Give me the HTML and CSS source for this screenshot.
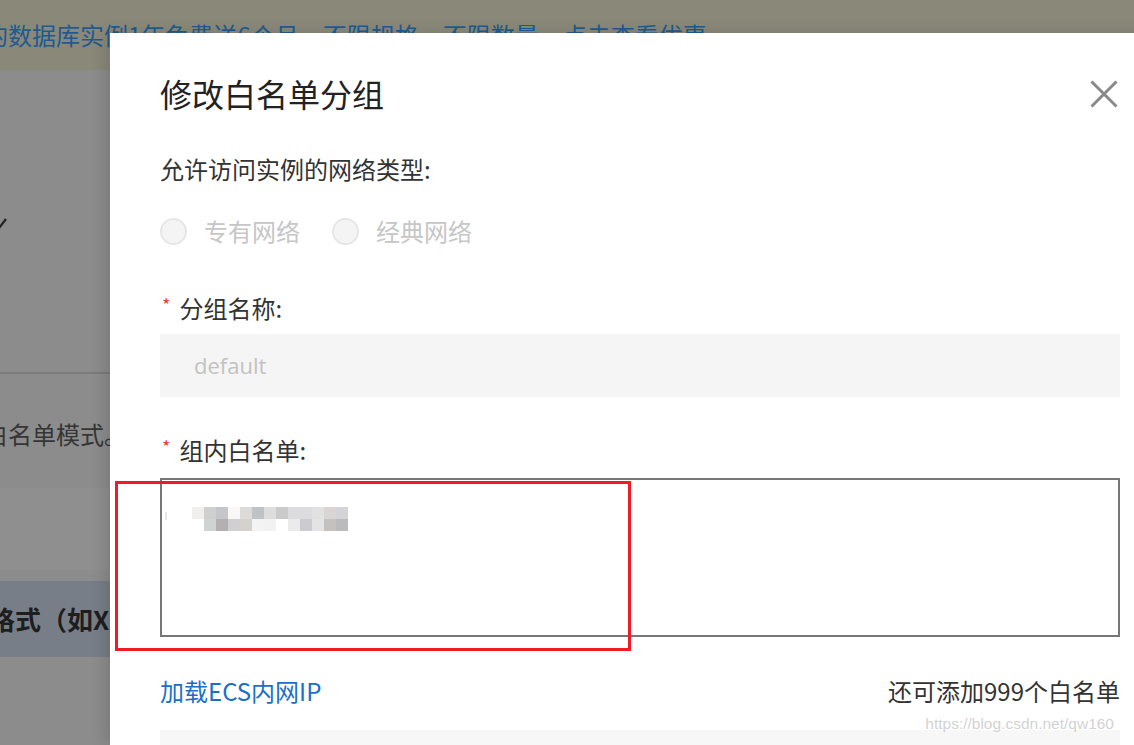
FILE: index.html
```html
<!DOCTYPE html>
<html lang="zh-CN">
<head>
<meta charset="utf-8">
<title>修改白名单分组</title>
<link rel="stylesheet" href="styles.css">
</head>
<body>
<div class="page">
  <div class="promo"><span class="promo-text">的数据库实例1年免费送6个月，不限规格，不限数量，点击查看优惠</span></div>
  <div class="page-body">
    <svg class="check" width="10" height="12" viewBox="0 0 10 12"><path d="M0 11 L7 2" stroke="#222" stroke-width="2.2" fill="none"/></svg>
    <div class="divider"></div>
    <div class="mode-text">白名单模式。</div>
    <div class="light-row"></div>
    <div class="table-head">格式（如X</div>
  </div>
</div>

<div class="modal">
  <div class="modal-header">
    <h2 class="modal-title">修改白名单分组</h2>
    <svg class="close" width="28" height="28" viewBox="0 0 28 28"><path d="M1.5 1.5 L26.5 26.5 M26.5 1.5 L1.5 26.5" stroke="#898989" stroke-width="3" fill="none"/></svg>
  </div>

  <div class="section-label">允许访问实例的网络类型:</div>
  <div class="radios">
    <label class="radio"><span class="radio-dot"></span><span>专有网络</span></label>
    <label class="radio"><span class="radio-dot"></span><span>经典网络</span></label>
  </div>

  <div class="field-label first"><span class="req">*</span><span>分组名称:</span></div>
  <div class="input disabled">default</div>

  <div class="field-label second"><span class="req">*</span><span>组内白名单:</span></div>
  <div class="textarea">
    <span class="caret"></span>
    <div class="blur">
      <div class="blur-row">
        <span class="px a1"></span><span class="px a2"></span><span class="px a3"></span><span class="px a4"></span><span class="px a5"></span><span class="px a6"></span><span class="px a7"></span><span class="px a8"></span><span class="px a9"></span><span class="px a10"></span><span class="px a11"></span><span class="px a12"></span><span class="px a13"></span>
      </div>
      <div class="blur-row">
        <span class="px b1"></span><span class="px b2"></span><span class="px b3"></span><span class="px b4"></span><span class="px b5"></span><span class="px b6"></span><span class="px b7"></span><span class="px b8"></span><span class="px b9"></span><span class="px b10"></span><span class="px b11"></span><span class="px b12"></span><span class="px b13"></span>
      </div>
    </div>
  </div>

  <div class="link-row">
    <a class="link">加载ECS内网IP</a>
    <span class="remain">还可添加999个白名单</span>
  </div>
  <div class="input bottom"></div>
</div>

<div class="annotation"></div>
<div class="watermark">https://blog.csdn.net/qw160</div>
</body>
</html>
```

FILE: styles.css
```css
html, body {
  margin: 0;
  padding: 0;
}
html {
  overflow: hidden;
}
body {
  width: 1134px;
  height: 745px;
  overflow: hidden;
  position: relative;
  background: #8c8c8c;
  font-family: "Noto Sans CJK SC", "Open Sans", sans-serif;
  color: #333;
}

/* background page (under mask) */
.page {
  display: flex;
  flex-direction: column;
}
.promo {
  height: 70px;
  box-sizing: border-box;
  padding-top: 19px;
  background: #898879;
  font-size: 24px;
  line-height: 32px;
  color: #1f5a90;
  white-space: nowrap;
  overflow: hidden;
  text-indent: -16px;
}
.page-body {
  display: flex;
  flex-direction: column;
  width: 110px;
  overflow: hidden;
}
.check {
  display: block;
  margin-top: 147px;
  margin-left: -1px;
}
.divider {
  margin-top: 143px;
  height: 2px;
  background: #7b7b7b;
}
.mode-text {
  margin-top: 44px;
  height: 32px;
  font-size: 24px;
  line-height: 32px;
  color: #353535;
  white-space: nowrap;
  text-indent: -16px;
}
.light-row {
  margin-top: 38px;
  height: 82px;
  background: #8f8f8f;
}
.table-head {
  margin-top: 11px;
  height: 76px;
  line-height: 76px;
  background: #777e87;
  font-size: 26px;
  font-weight: 700;
  color: #1e1e1e;
  white-space: nowrap;
  text-indent: -11px;
}

/* modal */
.modal {
  position: absolute;
  left: 110px;
  top: 33px;
  width: 1060px;
  height: 712px;
  overflow: hidden;
  box-sizing: border-box;
  padding: 40px 50px 0;
  background: #fff;
  box-shadow: -6px 0 14px rgba(0, 0, 0, 0.12);
}
.modal-header {
  display: flex;
  justify-content: space-between;
  align-items: center;
  height: 40px;
}
.modal-title {
  margin: 0;
  font-size: 32px;
  line-height: 40px;
  font-weight: 400;
  color: #222;
}
.close {
  display: block;
  margin-right: 2px;
  margin-top: 1px;
}
.section-label {
  margin-top: 40px;
  font-size: 24px;
  line-height: 32px;
  color: #333;
}
.radios {
  margin-top: 30px;
  display: flex;
  align-items: center;
  height: 32px;
}
.radio {
  display: flex;
  align-items: center;
  gap: 17px;
  margin-right: 32px;
  font-size: 24px;
  line-height: 32px;
  color: #c6c6c6;
}
.radio-dot {
  width: 27px;
  height: 27px;
  box-sizing: border-box;
  border-radius: 50%;
  border: 2px solid #e6e6e6;
  background: #f4f4f4;
}
.field-label {
  display: flex;
  align-items: center;
  font-size: 24px;
  line-height: 32px;
  color: #333;
}
.field-label.first {
  margin-top: 45px;
}
.field-label.second {
  margin-top: 37px;
}
.req {
  color: #e5432f;
  font-size: 18px;
  line-height: 1;
  margin-left: 2px;
  margin-right: 9px;
  padding-bottom: 8px;
}
.input {
  height: 63px;
  box-sizing: border-box;
  background: #f5f5f5;
}
.input.disabled {
  margin-top: 10px;
  padding-left: 34px;
  font-family: "Open Sans", "Noto Sans CJK SC", sans-serif;
  font-size: 22px;
  line-height: 63px;
  color: #c2c2c2;
}
.textarea {
  margin-top: 12px;
  height: 159px;
  box-sizing: border-box;
  border: 2px solid #777;
  padding: 27px 0 0 3px;
  display: flex;
  align-items: flex-start;
}
.caret {
  width: 2px;
  height: 8px;
  margin-top: 5px;
  margin-right: 25px;
  background: #e6e6e6;
}
.blur {
  display: flex;
  flex-direction: column;
}
.blur-row {
  display: flex;
}
.px {
  width: 12px;
  height: 12px;
}
.a1 { background: #f0efee; } .a2 { background: #cfcfcf; } .a3 { background: #c4c6ca; }
.a4 { background: #f9f8f6; } .a5 { background: #dcdbda; } .a6 { background: #bfc3c6; }
.a7 { background: #dddddd; } .a8 { background: #cacaca; } .a9 { background: #dcdcde; }
.a10 { background: #dcdcde; } .a11 { background: #e1e1e1; } .a12 { background: #d8d5d4; }
.a13 { background: #d4d4d8; }
.b1 { background: #ffffff; } .b2 { background: #d0d3d4; } .b3 { background: #b5b0b0; }
.b4 { background: #d0d0d2; } .b5 { background: #d5d1cc; } .b6 { background: #f3f3f3; }
.b7 { background: #f2f2f2; } .b8 { background: #ffffff; } .b9 { background: #ebebeb; }
.b10 { background: #cbcbd0; } .b11 { background: #e4e4e4; } .b12 { background: #c4c1bf; }
.b13 { background: #bbbbbd; }

.link-row {
  margin-top: 38px;
  display: flex;
  justify-content: space-between;
  align-items: center;
  font-size: 24px;
  line-height: 32px;
}
.link {
  color: #1b6fc9;
  text-decoration: none;
}
.remain {
  color: #333;
}
.input.bottom {
  margin-top: 23px;
  background: #f7f7f7;
}

/* overlays */
.annotation {
  position: absolute;
  left: 115px;
  top: 481px;
  width: 516px;
  height: 170px;
  box-sizing: border-box;
  border: 3.5px solid #ee1c25;
}
.watermark {
  position: absolute;
  right: 20px;
  top: 714px;
  font-family: "Liberation Sans", Arial, sans-serif;
  font-size: 15.5px;
  line-height: 20px;
  color: rgba(195, 195, 195, 0.75);
}
```
